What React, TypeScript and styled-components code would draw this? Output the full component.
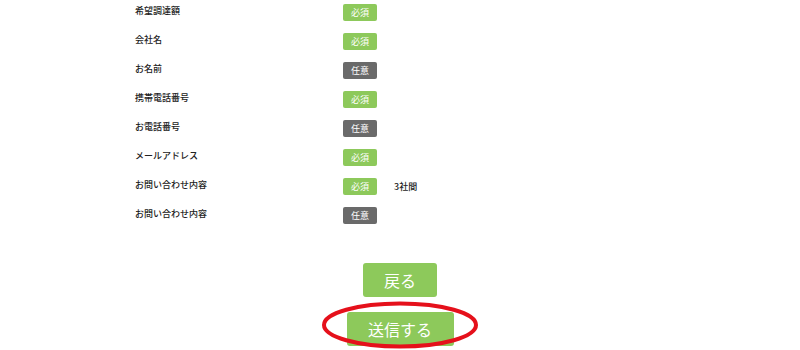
import React from 'react';
import styled, { createGlobalStyle } from 'styled-components';

type Field = {
  label: string;
  required: boolean;
  note?: string;
};

const fields: Field[] = [
  { label: '希望調達額', required: true },
  { label: '会社名', required: true },
  { label: 'お名前', required: false },
  { label: '携帯電話番号', required: true },
  { label: 'お電話番号', required: false },
  { label: 'メールアドレス', required: true },
  { label: 'お問い合わせ内容', required: true, note: '3社間' },
  { label: 'お問い合わせ内容', required: false }
];

export default function App (): React.ReactElement {
  return (
    <>
      <GlobalStyle />
      <Page>
        <List>
          {fields.map((field, i) => (
            <Row key={i}>
              <Label>{field.label}</Label>
              <Badge $required={field.required}>{field.required ? '必須' : '任意'}</Badge>
              {field.note ? <Note>{field.note}</Note> : null}
            </Row>
          ))}
        </List>
        <Actions>
          <Button type='button' $width={74}>戻る</Button>
          <SendWrap>
            <Button type='button' $width={107}>送信する</Button>
            <Circle viewBox='0 0 158 48' width='158' height='48'>
              <ellipse cx='79' cy='24' rx='76' ry='21.5' fill='none' stroke='#e5101b' strokeWidth='4' />
            </Circle>
          </SendWrap>
        </Actions>
      </Page>
    </>
  );
}

const GlobalStyle = createGlobalStyle`
  html, body {
    margin: 0;
    padding: 0;
    background: #fff;
    font-family: "Noto Sans CJK JP", "Noto Sans", sans-serif;
    color: #333;
  }
`;

const Page = styled.div`
  width: 800px;
  height: 350px;
  overflow: hidden;
  padding-left: 135px;
  box-sizing: border-box;
`;

const List = styled.div`
  display: flex;
  flex-direction: column;
  gap: 12px;
  padding-top: 4px;
`;

const Row = styled.div`
  display: flex;
  align-items: center;
  height: 17px;
`;

const Label = styled.div`
  width: 208px;
  font-size: 9px;
  font-weight: 500;
  line-height: 17px;
  margin-top: -4px;
  color: #222;
`;

const Badge = styled.span<{ $required: boolean }>`
  display: flex;
  align-items: center;
  justify-content: center;
  width: 34px;
  height: 17px;
  border-radius: 2px;
  background: ${p => p.$required ? '#8dc95b' : '#6a6a6a'};
  color: #fff;
  font-size: 9px;
`;

const Note = styled.span`
  margin-left: 17px;
  font-size: 9px;
  font-weight: 500;
  color: #222;
`;

const Actions = styled.div`
  display: flex;
  flex-direction: column;
  align-items: center;
  gap: 15px;
  margin-top: 39px;
  margin-left: -135px;
`;

const Button = styled.button<{ $width: number }>`
  width: ${p => p.$width}px;
  height: 34px;
  border: none;
  border-radius: 3px;
  background: #8dc95b;
  color: #fff;
  font-family: "Noto Sans CJK JP", sans-serif;
  font-size: 16px;
  padding: 0;
  display: flex;
  align-items: center;
  justify-content: center;
`;

const SendWrap = styled.div`
  position: relative;
`;

const Circle = styled.svg`
  position: absolute;
  left: -26px;
  top: -11px;
  pointer-events: none;
`;
